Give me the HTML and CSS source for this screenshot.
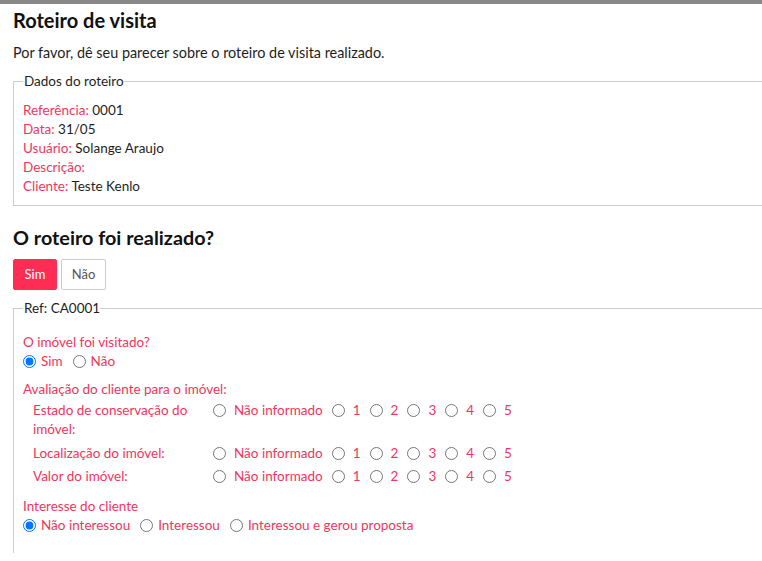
FILE: index.html
```html
<!DOCTYPE html>
<html lang="pt-BR">
<head>
<meta charset="utf-8">
<title>Roteiro de visita</title>
<link rel="stylesheet" href="styles.css">
</head>
<body>
<div class="topbar"></div>
<div class="page">
  <h1 class="title">Roteiro de visita</h1>
  <p class="intro">Por favor, dê seu parecer sobre o roteiro de visita realizado.</p>

  <fieldset class="box box-dados">
    <legend class="legend">Dados do roteiro</legend>
    <div class="line"><span class="key">Referência:</span> 0001</div>
    <div class="line"><span class="key">Data:</span> 31/05</div>
    <div class="line"><span class="key">Usuário:</span> Solange Araujo</div>
    <div class="line"><span class="key">Descrição:</span></div>
    <div class="line"><span class="key">Cliente:</span> Teste Kenlo</div>
  </fieldset>

  <h2 class="subtitle">O roteiro foi realizado?</h2>
  <div class="btns">
    <button class="btn btn-on" type="button">Sim</button>
    <button class="btn btn-off" type="button">Não</button>
  </div>

  <fieldset class="box box-ref">
    <legend class="legend">Ref: CA0001</legend>

    <div class="q">O imóvel foi visitado?</div>
    <div class="opts">
      <label class="opt"><input type="radio" name="vis" checked><span>Sim</span></label>
      <label class="opt"><input type="radio" name="vis"><span>Não</span></label>
    </div>

    <div class="q q-aval">Avaliação do cliente para o imóvel:</div>
    <div class="rating">
      <div class="rlabel rlabel-wrap">Estado de conservação do imóvel:</div>
      <div class="ropts">
        <label class="ropt"><input type="radio" name="r1"><span>Não informado</span></label>
        <label class="ropt"><input type="radio" name="r1"><span>1</span></label>
        <label class="ropt"><input type="radio" name="r1"><span>2</span></label>
        <label class="ropt"><input type="radio" name="r1"><span>3</span></label>
        <label class="ropt"><input type="radio" name="r1"><span>4</span></label>
        <label class="ropt"><input type="radio" name="r1"><span>5</span></label>
      </div>

      <div class="rlabel">Localização do imóvel:</div>
      <div class="ropts">
        <label class="ropt"><input type="radio" name="r2"><span>Não informado</span></label>
        <label class="ropt"><input type="radio" name="r2"><span>1</span></label>
        <label class="ropt"><input type="radio" name="r2"><span>2</span></label>
        <label class="ropt"><input type="radio" name="r2"><span>3</span></label>
        <label class="ropt"><input type="radio" name="r2"><span>4</span></label>
        <label class="ropt"><input type="radio" name="r2"><span>5</span></label>
      </div>

      <div class="rlabel">Valor do imóvel:</div>
      <div class="ropts">
        <label class="ropt"><input type="radio" name="r3"><span>Não informado</span></label>
        <label class="ropt"><input type="radio" name="r3"><span>1</span></label>
        <label class="ropt"><input type="radio" name="r3"><span>2</span></label>
        <label class="ropt"><input type="radio" name="r3"><span>3</span></label>
        <label class="ropt"><input type="radio" name="r3"><span>4</span></label>
        <label class="ropt"><input type="radio" name="r3"><span>5</span></label>
      </div>
    </div>

    <div class="q q-int">Interesse do cliente</div>
    <div class="opts">
      <label class="opt"><input type="radio" name="int" checked><span>Não interessou</span></label>
      <label class="opt"><input type="radio" name="int"><span>Interessou</span></label>
      <label class="opt"><input type="radio" name="int"><span>Interessou e gerou proposta</span></label>
    </div>
  </fieldset>
</div>
</body>
</html>
```

FILE: styles.css
```css
html, body {
  margin: 0;
  padding: 0;
  background: #ffffff;
  overflow: hidden;
}

body {
  font-family: Lato, "Open Sans", Arial, sans-serif;
  font-size: 13.5px;
  line-height: 19px;
  color: #1e1e1e;
}

.topbar {
  height: 4px;
  background: #888888;
}

.page {
  width: 800px;
  padding: 0 0 0 13px;
}

.title {
  margin: 4px 0 0 0;
  font-size: 20px;
  line-height: 24px;
  font-weight: 700;
  color: #111;
}

.intro {
  margin: 10.5px 0 0 0;
  font-size: 14.4px;
  line-height: 19px;
}

.box {
  margin: 10px 0 0 0;
  border: 1px solid #cccccc;
  padding: 10px 9px 9px 9px;
  min-width: 0;
}

.legend {
  padding: 0 0 0 1px;
  line-height: 19px;
  color: #1e1e1e;
}

.key {
  color: #f0365d;
}

.subtitle {
  margin: 19px 0 0 0;
  font-size: 19.8px;
  line-height: 24px;
  font-weight: 700;
  color: #111;
}

.btns {
  display: flex;
  gap: 4px;
  margin-top: 10px;
}

.btn {
  font-family: Lato, "Open Sans", Arial, sans-serif;
  font-size: 13px;
  height: 31px;
  border-radius: 2px;
  padding: 0;
  cursor: pointer;
}

.btn-on {
  width: 44px;
  background: #ff2d55;
  border: 1px solid #ff2d55;
  color: #ffffff;
}

.btn-off {
  width: 45px;
  background: #ffffff;
  border: 1px solid #cccccc;
  color: #555555;
}

.box-ref {
  margin-top: 9.5px;
  padding: 15px 9px 18px 9px;
  border-bottom: 0;
}

.q {
  color: #f0365d;
  line-height: 19px;
}

.q-aval {
  margin-top: 9px;
}

.q-int {
  margin-top: 9px;
}

.opts {
  display: flex;
  align-items: center;
  height: 19px;
  gap: 10px;
  color: #f0365d;
}

.opt, .ropt {
  display: flex;
  align-items: center;
}

.opt input {
  width: 13px;
  height: 13px;
  margin: 0 5px 0 0;
}

.rating {
  display: grid;
  grid-template-columns: 185px auto;
  color: #f0365d;
}

.rlabel {
  padding: 2px 4px 2px 10px;
}

.rlabel-wrap {
  padding-bottom: 3px;
}

.ropts {
  display: flex;
  align-items: flex-start;
  gap: 9px;
  padding: 2px 0;
  height: 19px;
}

.ropt {
  height: 19px;
}

.ropt input {
  width: 13px;
  height: 13px;
  margin: 0 8px 0 5px;
}

.ropt + .ropt input {
  margin-left: 0;
}
```
